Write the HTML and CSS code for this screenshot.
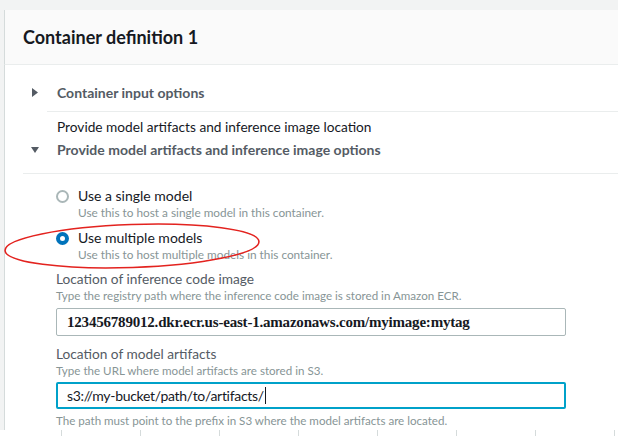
FILE: index.html
```html
<!DOCTYPE html>
<html>
<head>
<meta charset="utf-8">
<link rel="stylesheet" href="styles.css">
</head>
<body>
<div class="page">
  <section class="card">
    <header class="card-header">
      <h2 class="card-title">Container definition 1</h2>
    </header>
    <div class="card-body">
      <div class="expander">
        <svg class="caret" width="6" height="9" viewBox="0 0 6 9"><path d="M0 0 L6 4.5 L0 9 Z" fill="#545b64"/></svg>
        <span class="exp-label">Container input options</span>
      </div>
      <div class="rule rule-inset"></div>
      <div class="plain">Provide model artifacts and inference image location</div>
      <div class="expander expander-open">
        <svg class="caret" width="8" height="6" viewBox="0 0 8 6"><path d="M0 0 L8 0 L4 6 Z" fill="#545b64"/></svg>
        <span class="exp-label">Provide model artifacts and inference image options</span>
      </div>
      <div class="rule rule-full"></div>

      <div class="content">
        <div class="radio-group">
          <label class="radio">
            <span class="radio-dot"></span>
            <span class="radio-text">
              <span class="radio-label">Use a single model</span>
              <span class="radio-desc">Use this to host a single model in this container.</span>
            </span>
          </label>
          <label class="radio radio-second">
            <span class="radio-dot radio-dot-on"></span>
            <span class="radio-text">
              <span class="radio-label">Use multiple models</span>
              <span class="radio-desc">Use this to host multiple models in this container.</span>
            </span>
          </label>
          <svg class="annotation" width="262" height="52" viewBox="0 0 262 52">
            <ellipse cx="130" cy="25" rx="127" ry="21.5" fill="none" stroke="#e3231f" stroke-width="1.6" transform="rotate(-2 130 25)"/>
          </svg>
        </div>

        <div class="field field-first">
          <div class="field-label">Location of inference code image</div>
          <div class="field-desc">Type the registry path where the inference code image is stored in Amazon ECR.</div>
          <div class="input input-serif">123456789012.dkr.ecr.us-east-1.amazonaws.com/myimage:mytag</div>
        </div>

        <div class="field">
          <div class="field-label">Location of model artifacts</div>
          <div class="field-desc">Type the URL where model artifacts are stored in S3.</div>
          <div class="input input-focus">s3://my-bucket/path/to/artifacts/<span class="cursor"></span></div>
          <div class="field-note">The path must point to the prefix in S3 where the model artifacts are located.</div>
        </div>
      </div>
    </div>
  </section>
  <div class="ticks">
    <span class="tick"></span><span class="tick"></span><span class="tick"></span><span class="tick"></span>
    <span class="tick"></span><span class="tick"></span><span class="tick"></span><span class="tick"></span>
  </div>
</div>
</body>
</html>
```

FILE: styles.css
```css
html, body {
  margin: 0;
  padding: 0;
  background: #ffffff;
  overflow: hidden;
}

body {
  width: 618px;
  height: 436px;
  font-family: Lato, "Open Sans", sans-serif;
  color: #16191f;
}

.page {
  width: 618px;
  height: 436px;
  overflow: hidden;
}

.card {
  background: #f2f3f3;
  padding: 10px 0 0 4px;
  height: 420px;
}

.card-header,
.card-body {
  background: #ffffff;
  border-left: 1px solid #d5dbdb;
  width: 660px;
}

.card-header {
  background: #fafafa;
  border-bottom: 1px solid #eaeded;
  display: flex;
  align-items: center;
  padding-left: 18px;
  box-sizing: border-box;
  height: 55px;
}

.card-title {
  margin: 0;
  font-size: 18px;
  font-weight: 700;
  color: #16191f;
  line-height: 22px;
}

.card-body {
  height: 365px;
  padding-top: 13px;
  box-sizing: border-box;
}

.expander {
  display: flex;
  align-items: center;
  height: 28px;
  padding-left: 27px;
}

.caret {
  flex: none;
  margin-right: 19px;
}

.expander-open {
  height: 18px;
  margin-top: 5px;
  padding-left: 26px;
}

.expander-open .caret {
  margin-right: 18px;
  margin-top: 1px;
}

.exp-label {
  font-size: 14px;
  font-weight: 700;
  color: #545b64;
}

.rule {
  height: 1px;
  background: #eaeded;
}

.rule-inset {
  margin-top: 5px;
  margin-left: 42px;
}

.rule-full {
  margin-top: 15px;
  margin-left: 18px;
}

.plain {
  margin-top: 6px;
  padding-left: 52px;
  font-size: 13.7px;
  line-height: 17px;
  color: #16191f;
}

.content {
  padding-left: 51px;
  width: 510px;
}

.radio-group {
  position: relative;
  padding-top: 12px;
}

.radio {
  display: flex;
  align-items: flex-start;
}

.radio-second {
  margin-top: 8px;
}

.radio-dot {
  flex: none;
  width: 13px;
  height: 13px;
  box-sizing: border-box;
  border-radius: 50%;
  border: 2px solid #aab7b8;
  background: #ffffff;
  margin-top: 4px;
  margin-right: 9px;
}

.radio-dot-on {
  border: 4px solid #0073bb;
}

.radio-text {
  display: flex;
  flex-direction: column;
}

.radio-label {
  font-size: 14px;
  line-height: 20px;
  color: #16191f;
}

.radio-desc {
  font-size: 11.8px;
  line-height: 14px;
  color: #879596;
}

.annotation {
  position: absolute;
  left: -54px;
  top: 47px;
}

.field-first {
  margin-top: 7px;
}

.field + .field {
  margin-top: 8px;
}

.field-label {
  font-size: 13.7px;
  line-height: 20px;
  color: #545b64;
}

.field-desc,
.field-note {
  font-size: 11.6px;
  line-height: 14px;
  color: #879596;
}

.input {
  margin-top: 5px;
  height: 28px;
  box-sizing: border-box;
  border: 1px solid #aab7b8;
  border-radius: 2px;
  padding-left: 10px;
  display: flex;
  align-items: center;
  font-size: 14px;
  color: #16191f;
  background: #ffffff;
  width: 510px;
}

.input-serif {
  font-family: "Liberation Serif", serif;
  font-weight: 700;
  font-size: 15px;
  letter-spacing: -0.2px;
}

.input-focus {
  margin-top: 4px;
  height: 27px;
  border: 2px solid #00a1c9;
  padding-left: 9px;
  font-size: 14px;
  letter-spacing: -0.3px;
}

.cursor {
  display: inline-block;
  width: 1px;
  height: 17px;
  background: #16191f;
  margin-left: 1px;
}

.field-note {
  margin-top: 5px;
}

.ticks {
  display: flex;
  height: 6px;
  padding-left: 61px;
}

.tick {
  flex: none;
  width: 78px;
  border-left: 1px solid #d5dbdb;
}
```
